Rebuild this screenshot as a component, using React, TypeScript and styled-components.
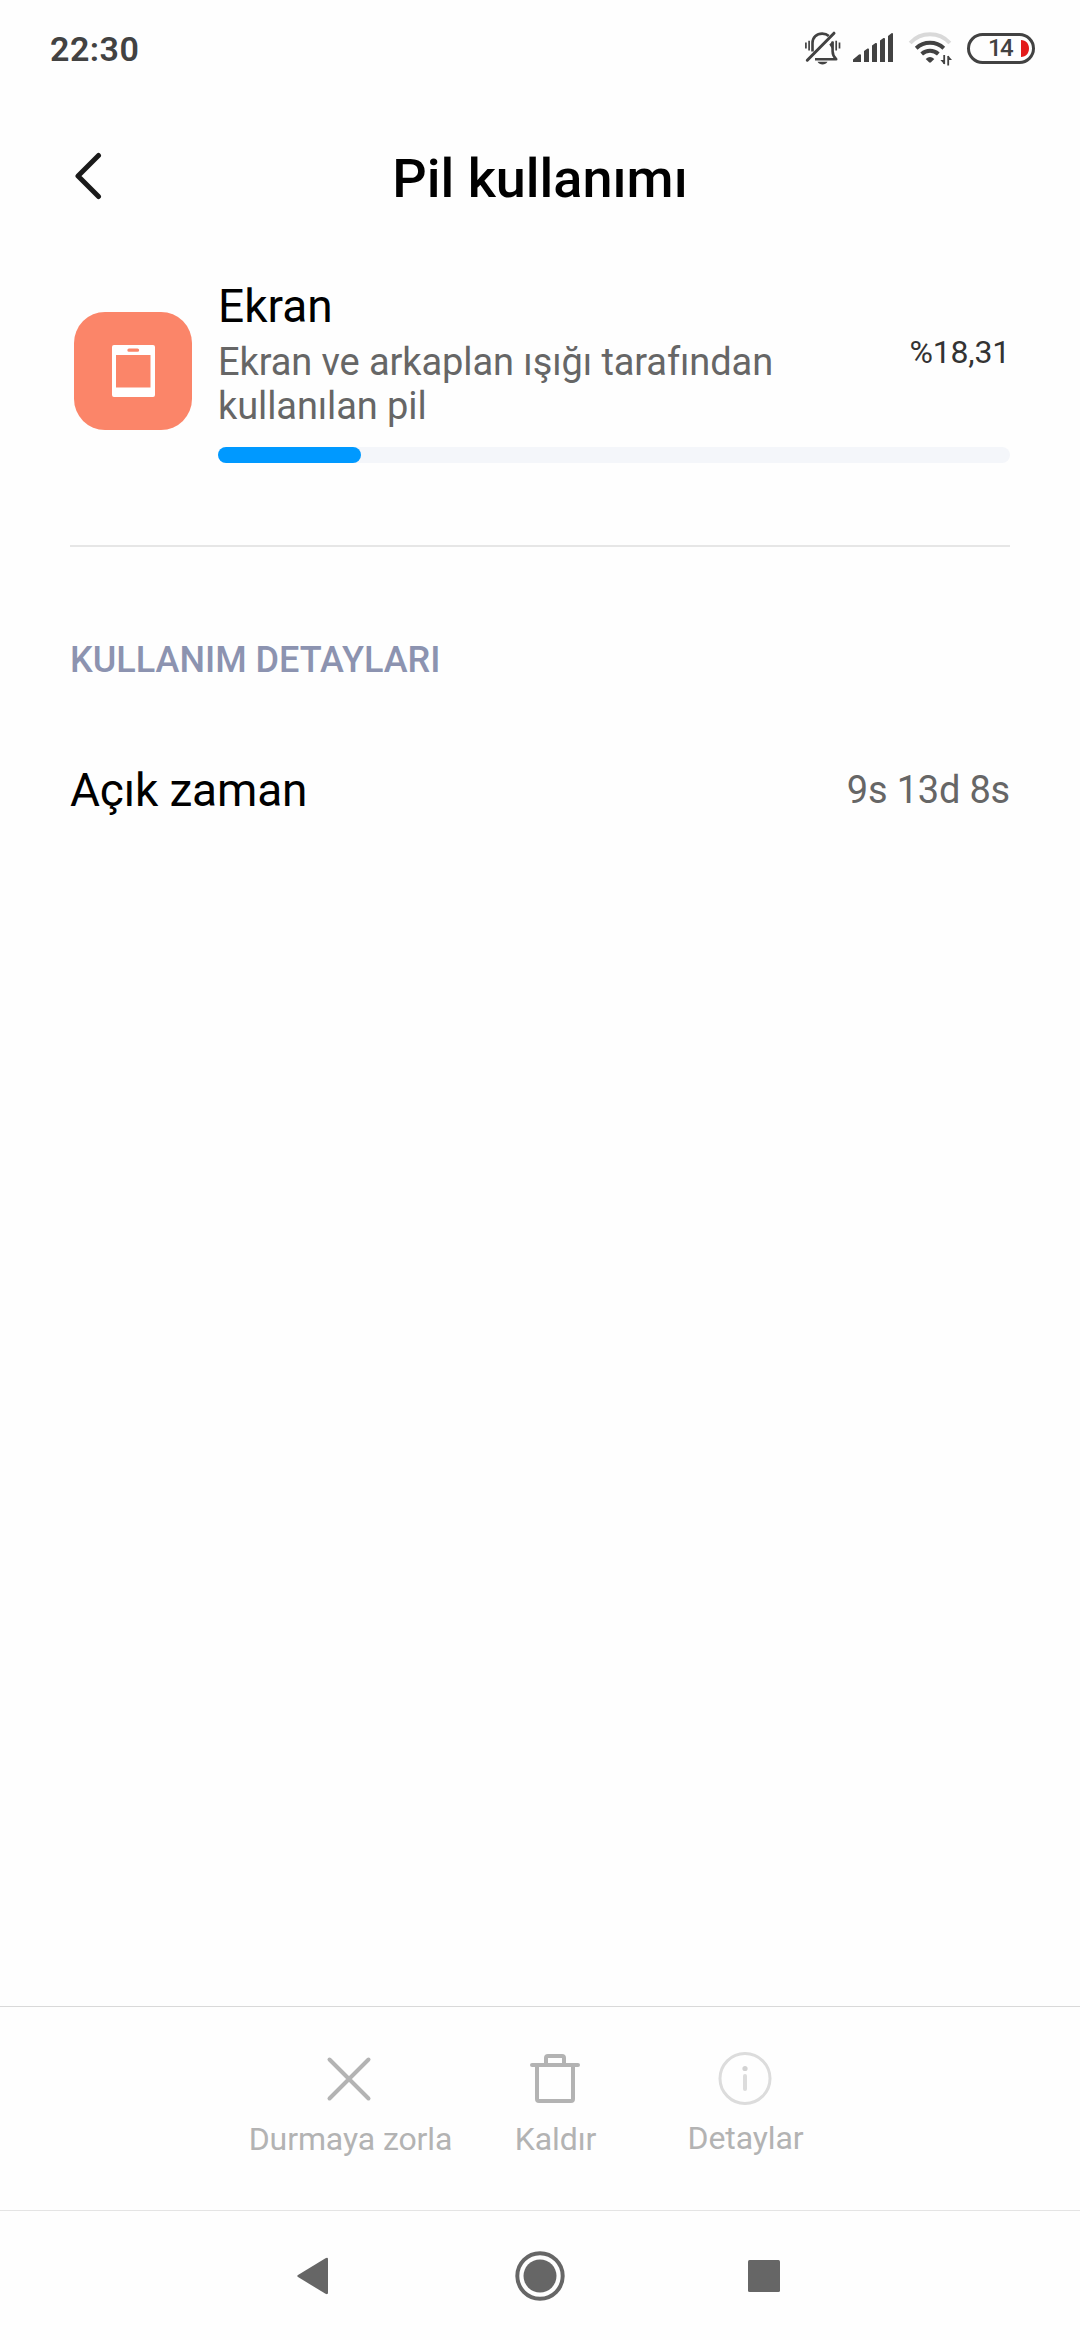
import React from 'react';
import styled, { createGlobalStyle } from 'styled-components';

const GlobalStyle = createGlobalStyle`
  * { box-sizing: border-box; }
  html, body { margin: 0; padding: 0; background: #fefefe; }
  body { font-family: Roboto, "Noto Sans", sans-serif; }
  svg { display: block; flex: none; }
`;

const Screen = styled.div`
  display: flex;
  flex-direction: column;
  width: 1080px;
  height: 2340px;
  overflow: hidden;
  background: #fefefe;
  color: #000;
`;

const StatusBar = styled.header`
  display: flex;
  align-items: center;
  height: 98px;
  padding: 0 45px 0 50px;
`;

const Clock = styled.time`
  flex: 1;
  font-size: 34px;
  font-weight: 600;
  line-height: 98px;
  letter-spacing: 0.5px;
  color: #424242;
`;

const StatusIcons = styled.div`
  display: flex;
  align-items: center;
  color: #424242;
  height: 96px;
  margin-bottom: 2px;
`;

const IconSlot = styled.span<{ $before: number }>`
  margin-left: ${(p) => p.$before}px;
`;

const Battery = styled.div`
  display: flex;
  align-items: center;
  justify-content: flex-end;
  width: 68px;
  height: 31px;
  margin-left: 15px;
  padding-right: 3px;
  border: 3px solid #424242;
  border-radius: 16px;
`;

const BatteryLevel = styled.span`
  width: 25px;
  margin-right: 8px;
  font-size: 24px;
  font-weight: 500;
  line-height: 25px;
  letter-spacing: -1.7px;
  white-space: nowrap;
`;

const TitleBar = styled.div`
  display: grid;
  grid-template-columns: 110px 1fr 110px;
  align-items: center;
  height: 161px;
`;

const BackButton = styled.button`
  display: flex;
  justify-content: flex-end;
  height: 54px;
  margin: 0 0 5px;
  padding: 0 8px 0 0;
  border: 0;
  background: none;
`;

const Title = styled.h1`
  margin: 0;
  font-size: 54px;
  font-weight: 500;
  line-height: 64px;
  text-align: center;
`;

const Content = styled.main`
  flex: 1;
  padding: 20px 70px 0;
`;

const UsageItem = styled.section`
  display: flex;
  height: 268px;
  border-bottom: 2px solid #e6e6e6;
`;

const AppIcon = styled.div`
  display: flex;
  align-items: center;
  justify-content: center;
  flex: none;
  width: 118px;
  height: 118px;
  margin: 33px 26px 0 4px;
  border-radius: 31px;
  background: #fb8569;
`;

const UsageBody = styled.div`
  flex: 1;
`;

const UsageRow = styled.div`
  display: flex;
  justify-content: space-between;
`;

const AppName = styled.h2`
  margin: 0 0 7px;
  font-size: 46px;
  font-weight: 400;
  line-height: 54px;
`;

const Description = styled.p`
  width: 570px;
  margin: 0;
  font-size: 38px;
  line-height: 44px;
  letter-spacing: -0.09px;
  color: #666;
`;

const Percent = styled.span`
  margin-top: 53px;
  font-size: 32px;
  line-height: 40px;
  letter-spacing: -0.2px;
  color: #333;
`;

const Track = styled.div`
  height: 16px;
  margin-top: 19px;
  border-radius: 8px;
  background: #f4f6fa;
`;

const Fill = styled.div`
  height: 16px;
  border-radius: 8px;
  background: #0099ff;
`;

const SectionTitle = styled.h3`
  margin: 91px 0 0;
  font-size: 36px;
  font-weight: 500;
  line-height: 44px;
  color: #8c93b0;
`;

const DetailRow = styled.div`
  display: flex;
  align-items: center;
  justify-content: space-between;
  height: 160px;
  margin-top: 28px;
`;

const DetailName = styled.span`
  font-size: 46px;
  letter-spacing: -0.15px;
`;

const DetailValue = styled.span`
  font-size: 38px;
  letter-spacing: -0.2px;
  color: #666;
`;

const ActionBar = styled.footer`
  display: grid;
  grid-template-columns: 207px 206px 173px;
  height: 205px;
  padding: 45px 0 0 245px;
  border-top: 1px solid #d9d9d9;
  border-bottom: 1px solid #e4e4e4;
`;

const Action = styled.button`
  display: flex;
  flex-direction: column;
  align-items: center;
  padding: 0;
  border: 0;
  background: none;
  font: 400 32px/40px Roboto, "Noto Sans", sans-serif;
  color: #b3b3b3;
  white-space: nowrap;
`;

const ActionLabel = styled.span<{ $top?: number; $indent?: number }>`
  margin-top: ${(p) => p.$top ?? 13}px;
  padding-left: ${(p) => p.$indent ?? 0}px;
  letter-spacing: -0.1px;
`;

const NavBar = styled.nav`
  display: flex;
  justify-content: space-between;
  align-items: center;
  height: 129px;
  padding: 0 300px 0 297px;
  color: #666;
`;

const HomeButton = styled.span`
  padding-left: 3px;
`;

const usage = { name: 'Ekran', percent: 18.05, label: '%18,31' };

export default function App() {
  return (
    <>
      <GlobalStyle />
      <Screen>
        <StatusBar>
          <Clock>22:30</Clock>
          <StatusIcons>
            <svg width="36" height="34" viewBox="0 0 36 34" fill="none" stroke="currentColor" strokeWidth="2.6">
              <path d="M7.500 20.500V12C7.500 6.500 11.500 2.600 17.200 2.600c2.700 0 5 .9 6.600 2.400" />
              <path d="M10 28.200H31.200c-2.300-2.200-3.600-4.500-3.600-8V10.500" strokeLinejoin="round" />
              <path d="M24.300 13.500l3.500-3.500v9z" fill="currentColor" stroke="none" />
              <path d="M2.300 29.200 29 2.200" strokeWidth="3" strokeLinecap="round" />
              <path d="M12.500 30.800h10c-1 1.900-3 2.700-5 2.700s-4-.8-5-2.700z" fill="currentColor" stroke="none" />
              <path d="M.9 11.500v6M4.100 9.800v9.700M31.200 9.800v9.700M34.500 11.500v6" strokeWidth="1.700" />
            </svg>
            <IconSlot $before={12}>
              <svg width="40" height="30" viewBox="0 0 40 30" fill="currentColor">
                <path d="M0 29v-2.500l6-5q2-1 2 1v6.500zM11 29v-11l3.500-2.500q1.500-.5 1.500 1v12.500zM19 29v-16.500l3.500-2.500q1.500-.5 1.500 1v18zM27 29v-21.500l3.500-2.500q1.500-.5 1.500 1v23zM35 29v-26l3.500-2.800q1.500-.5 1.500 1v27.800z" />
              </svg>
            </IconSlot>
            <IconSlot $before={15}>
              <svg width="44" height="36" viewBox="0 -1 44 36" fill="none" stroke="currentColor" strokeWidth="4">
                <path d="M2.200 12A27 27 0 0 1 41.800 12" stroke="#d9d9d9" />
                <path d="M8.200 17.200A20.500 20.500 0 0 1 35.800 17.200" />
                <path d="M13.700 22.900A12.500 12.500 0 0 1 30.300 22.900" />
                <path d="M17.700 28q4.300-4 8.600 0l-3.300 3.300q-1 .8-2 0z" fill="currentColor" stroke="none" />
                <path d="M36.200 24v9M40.200 25v9.500" strokeWidth="1.800" />
                <path d="M32.400 29h4v4.500zM44 29h-4v-4.500z" fill="currentColor" stroke="none" />
              </svg>
            </IconSlot>
            <Battery>
              <BatteryLevel>14</BatteryLevel>
              <svg width="8" height="17" viewBox="0 0 8 17">
                <path d="M0 0C5 0 8 4 8 8.500S5 17 0 17z" fill="#e31b1b" />
              </svg>
            </Battery>
          </StatusIcons>
        </StatusBar>

        <TitleBar>
          <BackButton aria-label="Geri">
            <svg width="27" height="54" viewBox="0 0 27 54" fill="none" stroke="#1a1a1a" strokeWidth="5" strokeLinecap="round" strokeLinejoin="round">
              <path d="M23.500 6.500 3 27l20.500 20.500" />
            </svg>
          </BackButton>
          <Title>Pil kullanımı</Title>
        </TitleBar>

        <Content>
          <UsageItem>
            <AppIcon>
              <svg width="43" height="52" viewBox="0 0 43 52">
                <path fillRule="evenodd" fill="#fff" d="M2 0h39q2 0 2 2v48q0 2-2 2H2q-2 0-2-2V2Q0 0 2 0zM4 10v32.500h34.500V10zM17 3.500a1.600 1.600 0 0 0 0 3.300h8.500a1.600 1.600 0 0 0 0-3.300z" />
              </svg>
            </AppIcon>
            <UsageBody>
              <UsageRow>
                <div>
                  <AppName>{usage.name}</AppName>
                  <Description>Ekran ve arkaplan ışığı tarafından kullanılan pil</Description>
                </div>
                <Percent>{usage.label}</Percent>
              </UsageRow>
              <Track>
                <Fill style={{ width: `${usage.percent}%` }} />
              </Track>
            </UsageBody>
          </UsageItem>

          <SectionTitle>KULLANIM DETAYLARI</SectionTitle>
          <DetailRow>
            <DetailName>Açık zaman</DetailName>
            <DetailValue>9s 13d 8s</DetailValue>
          </DetailRow>
        </Content>

        <ActionBar>
          <Action>
            <svg width="54" height="54" viewBox="0 0 54 54" fill="none" stroke="#b3b3b3" strokeWidth="4" strokeLinecap="round">
              <path d="M7.500 7.500l39 39M46.500 7.500l-39 39" />
            </svg>
            <ActionLabel $indent={4}>Durmaya zorla</ActionLabel>
          </Action>
          <Action>
            <svg width="54" height="54" viewBox="0 0 54 54" fill="none" stroke="#b3b3b3" strokeWidth="4" strokeLinecap="round">
              <path d="M4 13h46M9 13v34q0 2 2 2h32q2 0 2-2V13M18 13V6q0-2 2-2h14q2 0 2 2v7" />
            </svg>
            <ActionLabel $indent={1}>Kaldır</ActionLabel>
          </Action>
          <Action>
            <svg width="54" height="54" viewBox="0 0 54 54" fill="none" stroke="#dcdcdc" strokeLinecap="round">
              <circle cx="27" cy="26.500" r="25" strokeWidth="3" />
              <circle cx="27" cy="16.500" r="2.600" fill="#d2d2d2" stroke="none" />
              <path d="M27 24v13" strokeWidth="4" />
            </svg>
            <ActionLabel $top={12} $indent={2}>Detaylar</ActionLabel>
          </Action>
        </ActionBar>

        <NavBar>
          <svg width="31" height="38" viewBox="0 0 31 38" fill="currentColor">
            <path d="M28.500 1.200q2.500-1.200 2.500 1v33.600q0 2.200-2.500 1L1 20q-1.500-1 0-2z" />
          </svg>
          <HomeButton>
            <svg width="50" height="50" viewBox="0 0 50 50">
              <circle cx="25" cy="25" r="22.700" fill="none" stroke="currentColor" strokeWidth="4" />
              <circle cx="25" cy="25" r="16.500" fill="currentColor" />
            </svg>
          </HomeButton>
          <svg width="32" height="32" viewBox="0 0 32 32">
            <rect width="32" height="32" rx="1.500" fill="currentColor" />
          </svg>
        </NavBar>
      </Screen>
    </>
  );
}
